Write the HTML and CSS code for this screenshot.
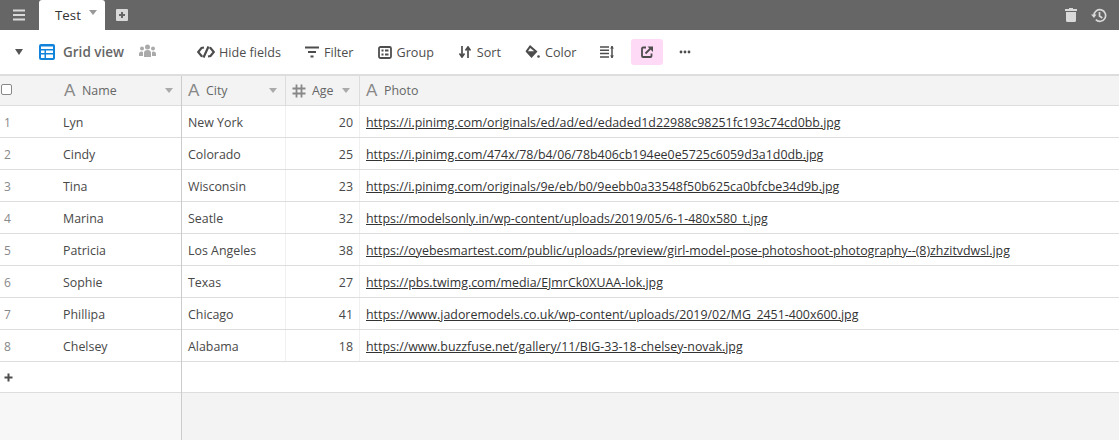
FILE: index.html
```html
<!DOCTYPE html>
<html lang="en">
<head>
<meta charset="utf-8">
<title>Test - Grid view</title>
<link rel="stylesheet" href="styles.css">
</head>
<body>
<header class="topbar">
  <svg class="menu-icon" width="14" height="12" viewBox="0 0 14 12"><path d="M1 1.500h12M1 6h12M1 10.500h12" stroke="#d9d9d9" stroke-width="2"/></svg>
  <div class="tab"><span>Test</span><i class="caret tab-caret"></i></div>
  <svg class="add-tab" width="14" height="14" viewBox="0 0 14 14"><path fill-rule="evenodd" d="M2 1h10a1 1 0 0 1 1 1v10a1 1 0 0 1-1 1H2a1 1 0 0 1-1-1V2a1 1 0 0 1 1-1zM6 4v2H4v2h2v2h2V8h2V6H8V4z" fill="#d9d9d9"/></svg>
  <div class="top-right">
    <svg width="12" height="14" viewBox="0 0 12 14"><path d="M4 0h4v1h4v2H0V1h4zM1 4h10v8.500a1.500 1.500 0 0 1-1.500 1.500h-7A1.500 1.500 0 0 1 1 12.500z" fill="#d9d9d9"/></svg>
    <svg width="16" height="15" viewBox="0 0 16 15"><path d="M3 7.500a5.800 5.800 0 1 1 1.800 4.200" fill="none" stroke="#d9d9d9" stroke-width="1.700"/><path d="M0 6.500h5.500L3 10z" fill="#d9d9d9"/><path d="M8.500 4v4l2.800 2" fill="none" stroke="#d9d9d9" stroke-width="1.700"/></svg>
  </div>
</header>
<nav class="toolbar">
  <i class="caret view-caret"></i>
  <svg class="grid-icon" width="16" height="16" viewBox="0 0 16 16"><rect width="16" height="16" rx="2" fill="#1283da"/><path d="M2 2.500h12v2.500H2zM2 6.500h3.500V9H2zM7 6.500h7V9H7zM2 10.500h3.500V14H2zM7 10.500h7V14H7z" fill="#fff"/></svg>
  <span class="view-name">Grid view</span>
  <svg class="people" width="17" height="13" viewBox="0 0 17 13"><g fill="#aaa"><circle cx="8.500" cy="3" r="2.500"/><circle cx="3" cy="4.500" r="2"/><circle cx="14" cy="4.500" r="2"/><path d="M5 13V9a3.500 3 0 0 1 7 0v4zM0 12V9.500A2.500 2 0 0 1 4 8v4zM17 12V9.500A2.500 2 0 0 0 13 8v4z"/></g></svg>
  <div class="tool hide"><svg width="18" height="12" viewBox="0 0 18 12"><path d="M7 1.500 4.500 2 1.200 6l3.300 4 1 .2M11 10.500l2.500-.5 3.300-4-3.300-4-1-.2M11.500 0.500 6.500 11.500" fill="none" stroke="#4d4d4d" stroke-width="2.200"/></svg><span>Hide fields</span></div>
  <div class="tool filter"><svg width="14" height="12" viewBox="0 0 14 12"><path d="M0 1.500h14M3 6h8M5.500 10.500h3" fill="none" stroke="#4d4d4d" stroke-width="2"/></svg><span>Filter</span></div>
  <div class="tool group"><svg width="14" height="13" viewBox="0 0 14 13"><rect x="1" y="1" width="12" height="11" rx="1.500" fill="none" stroke="#4d4d4d" stroke-width="1.800"/><path d="M3.500 4.500h2M7 4.500h3.500M3.500 8.500h2M7 8.500h3.500" stroke="#4d4d4d" stroke-width="1.800"/></svg><span>Group</span></div>
  <div class="tool sort"><svg width="12" height="12" viewBox="0 0 12 12"><path d="M3 0v10M0.500 7.500 3 11l2.500-3.500M9 12V2M6.500 4.500 9 1l2.500 3.500" fill="none" stroke="#4d4d4d" stroke-width="1.700"/></svg><span>Sort</span></div>
  <div class="tool color"><svg width="15" height="14" viewBox="0 0 15 14"><path d="M5 0 1 5.500a1 1 0 0 0 0 1.500l5.500 6 6-6.500z" fill="#4d4d4d"/><path d="M5.200 3 3 6.200h6.200z" fill="#fff"/><circle cx="13.500" cy="11.500" r="1.300" fill="#4d4d4d"/></svg><span>Color</span></div>
  <svg class="row-height" width="14" height="12" viewBox="0 0 14 12"><path d="M0 1h9M0 4.300h9M0 7.600h9M0 11h9M12 0v12" fill="none" stroke="#4d4d4d" stroke-width="1.500"/><path d="M10 2.500 12 0l2 2.500zM10 9.500 12 12l2-2.500z" fill="#4d4d4d"/></svg>
  <div class="share"><svg width="12" height="12" viewBox="0 0 12 12"><path d="M5 1.500H2A1 1 0 0 0 1 2.500V10a1 1 0 0 0 1 1h7.500a1 1 0 0 0 1-1V7.500" fill="none" stroke="#4d4d4d" stroke-width="1.800"/><path d="M4.500 7.500 10 2" stroke="#4d4d4d" stroke-width="1.800"/><path d="M6.500 0.500H12V6z" fill="#4d4d4d"/></svg></div>
  <svg class="more" width="12" height="4" viewBox="0 0 12 4"><g fill="#4d4d4d"><circle cx="2" cy="2" r="1.400"/><circle cx="6" cy="2" r="1.400"/><circle cx="10" cy="2" r="1.400"/></g></svg>
</nav>
<main class="grid">
  <section class="pane left">
    <div class="head row">
      <div class="cell check"><i class="box"></i></div>
      <div class="cell name-col"><span class="type">A</span><span>Name</span><i class="caret"></i></div>
    </div>
    <div class="row"><div class="cell num">1</div><div class="cell name-col">Lyn</div></div>
    <div class="row"><div class="cell num">2</div><div class="cell name-col">Cindy</div></div>
    <div class="row"><div class="cell num">3</div><div class="cell name-col">Tina</div></div>
    <div class="row"><div class="cell num">4</div><div class="cell name-col">Marina</div></div>
    <div class="row"><div class="cell num">5</div><div class="cell name-col">Patricia</div></div>
    <div class="row"><div class="cell num">6</div><div class="cell name-col">Sophie</div></div>
    <div class="row"><div class="cell num">7</div><div class="cell name-col">Phillipa</div></div>
    <div class="row"><div class="cell num">8</div><div class="cell name-col">Chelsey</div></div>
    <div class="add-row"><svg width="9" height="9" viewBox="0 0 9 9"><path d="M4.500 0.500v8M0.500 4.500h8" stroke="#4d4d4d" stroke-width="2"/></svg></div>
    <div class="fill"></div>
  </section>
  <section class="pane right">
    <div class="head row">
      <div class="cell city"><span class="type">A</span><span>City</span><i class="caret"></i></div>
      <div class="cell age"><svg class="hash" width="14" height="14" viewBox="0 0 14 14"><path d="M4.500 0.500v13M9.500 0.500v13M0.500 4.500h13M0.500 9.500h13" fill="none" stroke="#888" stroke-width="1.800"/></svg><span>Age</span><i class="caret"></i></div>
      <div class="cell photo"><span class="type">A</span><span>Photo</span></div>
    </div>
    <div class="row"><div class="cell city">New York</div><div class="cell age value">20</div><div class="cell photo"><u>https://i.pinimg.com/originals/ed/ad/ed/edaded1d22988c98251fc193c74cd0bb.jpg</u></div></div>
    <div class="row"><div class="cell city">Colorado</div><div class="cell age value">25</div><div class="cell photo"><u>https://i.pinimg.com/474x/78/b4/06/78b406cb194ee0e5725c6059d3a1d0db.jpg</u></div></div>
    <div class="row"><div class="cell city">Wisconsin</div><div class="cell age value">23</div><div class="cell photo"><u>https://i.pinimg.com/originals/9e/eb/b0/9eebb0a33548f50b625ca0bfcbe34d9b.jpg</u></div></div>
    <div class="row"><div class="cell city">Seatle</div><div class="cell age value">32</div><div class="cell photo"><u>https://modelsonly.in/wp-content/uploads/2019/05/6-1-480x580_t.jpg</u></div></div>
    <div class="row"><div class="cell city">Los Angeles</div><div class="cell age value">38</div><div class="cell photo"><u>https://oyebesmartest.com/public/uploads/preview/girl-model-pose-photoshoot-photography--(8)zhzitvdwsl.jpg</u></div></div>
    <div class="row"><div class="cell city">Texas</div><div class="cell age value">27</div><div class="cell photo"><u>https://pbs.twimg.com/media/EJmrCk0XUAA-lok.jpg</u></div></div>
    <div class="row"><div class="cell city">Chicago</div><div class="cell age value">41</div><div class="cell photo"><u>https://www.jadoremodels.co.uk/wp-content/uploads/2019/02/MG_2451-400x600.jpg</u></div></div>
    <div class="row"><div class="cell city">Alabama</div><div class="cell age value">18</div><div class="cell photo"><u>https://www.buzzfuse.net/gallery/11/BIG-33-18-chelsey-novak.jpg</u></div></div>
    <div class="add-row"></div>
    <div class="fill"></div>
  </section>
</main>
</body>
</html>
```

FILE: styles.css
```css
* { box-sizing: border-box; }
html, body { margin: 0; height: 100%; overflow: hidden; }
body {
  width: 1119px;
  height: 440px;
  display: flex;
  flex-direction: column;
  font-family: "Open Sans", "Liberation Sans", sans-serif;
  font-size: 12.400px;
  color: #484848;
  background: #fff;
}
.caret {
  display: block;
  width: 0;
  height: 0;
  border-left: 4px solid transparent;
  border-right: 4px solid transparent;
  border-top: 5px solid #aaa;
}
.topbar {
  height: 30px;
  flex: none;
  background: #666;
  display: flex;
  align-items: center;
}
.menu-icon { margin-left: 12px; }
.tab {
  width: 66px;
  height: 30px;
  margin-left: 13px;
  background: #fff;
  border-radius: 3px 3px 0 0;
  display: flex;
  align-items: center;
  padding-left: 16px;
  color: #333;
  font-size: 13.300px;
}
.tab-caret { margin-left: 8px; margin-top: -6px; border-top-color: #999; }
.add-tab { margin-left: 10px; }
.top-right {
  margin-left: auto;
  margin-right: 12px;
  display: flex;
  align-items: center;
  gap: 14px;
}
.toolbar {
  height: 44px;
  flex: none;
  display: flex;
  align-items: center;
  color: #4d4d4d;
  font-size: 12.600px;
}
.view-caret { margin-left: 15px; border-left-width: 4.500px; border-right-width: 4.500px; border-top: 6px solid #555; }
.grid-icon { margin-left: 16px; }
.view-name { margin-left: 8px; font-size: 13.500px; font-weight: 600; color: #666; }
.people { margin-left: 15px; margin-top: -4px; }
.tool { display: flex; align-items: center; gap: 4px; font-weight: 500; }
.hide { margin-left: 41px; }
.filter { margin-left: 24px; gap: 5px; }
.group { margin-left: 24px; gap: 5px; }
.sort { margin-left: 25px; gap: 6px; }
.color { margin-left: 24px; gap: 5px; }
.row-height { margin-left: 24px; }
.share {
  width: 32px;
  height: 26px;
  margin-left: 17px;
  background: #ffdaf6;
  border-radius: 3px;
  display: flex;
  align-items: center;
  justify-content: center;
}
.more { margin-left: 16px; }
.grid {
  flex: 1;
  display: flex;
  border-top: 2px solid #ddd;
}
.pane { display: flex; flex-direction: column; }
.left { width: 182px; flex: none; border-right: 1px solid #ccc; background: #fff; }
.right { flex: 1; min-width: 0; }
.row {
  height: 32px;
  flex: none;
  display: flex;
  border-bottom: 1px solid #ddd;
}
.head { height: 30px; background: #f3f3f3; color: #666; }
.cell {
  display: flex;
  align-items: center;
  padding: 1px 6px 0;
  white-space: nowrap;
  border-right: 1px solid #f0f0f0;
}
.head .cell { border-right-color: #ddd; padding-top: 0; }
.check { width: 54px; padding: 0 0 0 1px; border-right: 0; }
.num { width: 54px; padding-left: 4px; border-right: 0; color: #888; font-size: 12px; }
.name-col { flex: 1; padding-left: 9px; border-right: 0; }
.head .name-col { padding-left: 10px; }
.box {
  display: block;
  width: 11px;
  height: 11px;
  border: 1px solid #888;
  border-radius: 2px;
  background: #fff;
  margin-top: -2px;
}
.type {
  font-family: "Liberation Sans", sans-serif;
  font-size: 17px;
  color: #888;
  margin-right: 6px;
  width: 12px;
  line-height: 1;
}
.hash { margin-right: 6px; }
.head .caret { margin-left: auto; margin-right: 2px; }
.city { width: 104px; }
.age { width: 74px; }
.head .age .caret { margin-right: 3px; }
.value { justify-content: flex-end; }
.photo { flex: 1; border-right: 0; min-width: 0; }
.photo u { color: #333; }
.add-row {
  height: 31px;
  flex: none;
  display: flex;
  align-items: center;
  padding-left: 4px;
  border-bottom: 1px solid #ddd;
}
.fill { flex: 1; background: #f3f3f3; }
.left .fill { background: #f7f7f7; }
```
